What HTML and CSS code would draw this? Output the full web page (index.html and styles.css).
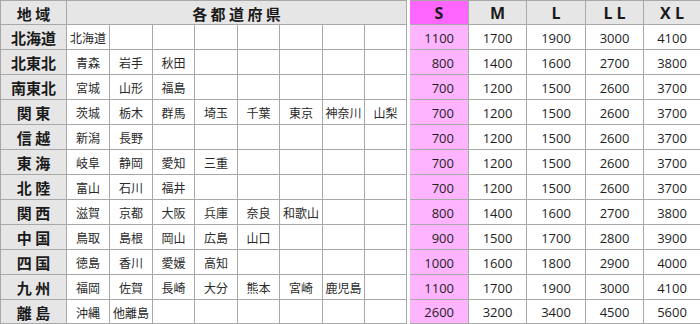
FILE: index.html
```html
<!DOCTYPE html>
<html lang="ja">
<head>
<meta charset="utf-8">
<title>地域別料金表</title>
<link rel="stylesheet" href="styles.css">
</head>
<body>
<div class="page">
  <div class="area-grid">
    <div class="cell head region">地 域</div>
    <div class="cell head pref-head">各 都 道 府 県</div>

    <div class="cell region">北海道</div>
    <div class="cell pref">北海道</div><div class="cell pref"></div><div class="cell pref"></div><div class="cell pref"></div><div class="cell pref"></div><div class="cell pref"></div><div class="cell pref"></div><div class="cell pref"></div>

    <div class="cell region">北東北</div>
    <div class="cell pref">青森</div><div class="cell pref">岩手</div><div class="cell pref">秋田</div><div class="cell pref"></div><div class="cell pref"></div><div class="cell pref"></div><div class="cell pref"></div><div class="cell pref"></div>

    <div class="cell region">南東北</div>
    <div class="cell pref">宮城</div><div class="cell pref">山形</div><div class="cell pref">福島</div><div class="cell pref"></div><div class="cell pref"></div><div class="cell pref"></div><div class="cell pref"></div><div class="cell pref"></div>

    <div class="cell region">関 東</div>
    <div class="cell pref">茨城</div><div class="cell pref">栃木</div><div class="cell pref">群馬</div><div class="cell pref">埼玉</div><div class="cell pref">千葉</div><div class="cell pref">東京</div><div class="cell pref">神奈川</div><div class="cell pref">山梨</div>

    <div class="cell region">信 越</div>
    <div class="cell pref">新潟</div><div class="cell pref">長野</div><div class="cell pref"></div><div class="cell pref"></div><div class="cell pref"></div><div class="cell pref"></div><div class="cell pref"></div><div class="cell pref"></div>

    <div class="cell region">東 海</div>
    <div class="cell pref">岐阜</div><div class="cell pref">静岡</div><div class="cell pref">愛知</div><div class="cell pref">三重</div><div class="cell pref"></div><div class="cell pref"></div><div class="cell pref"></div><div class="cell pref"></div>

    <div class="cell region">北 陸</div>
    <div class="cell pref">富山</div><div class="cell pref">石川</div><div class="cell pref">福井</div><div class="cell pref"></div><div class="cell pref"></div><div class="cell pref"></div><div class="cell pref"></div><div class="cell pref"></div>

    <div class="cell region">関 西</div>
    <div class="cell pref">滋賀</div><div class="cell pref">京都</div><div class="cell pref">大阪</div><div class="cell pref">兵庫</div><div class="cell pref">奈良</div><div class="cell pref">和歌山</div><div class="cell pref"></div><div class="cell pref"></div>

    <div class="cell region">中 国</div>
    <div class="cell pref">鳥取</div><div class="cell pref">島根</div><div class="cell pref">岡山</div><div class="cell pref">広島</div><div class="cell pref">山口</div><div class="cell pref"></div><div class="cell pref"></div><div class="cell pref"></div>

    <div class="cell region">四 国</div>
    <div class="cell pref">徳島</div><div class="cell pref">香川</div><div class="cell pref">愛媛</div><div class="cell pref">高知</div><div class="cell pref"></div><div class="cell pref"></div><div class="cell pref"></div><div class="cell pref"></div>

    <div class="cell region">九 州</div>
    <div class="cell pref">福岡</div><div class="cell pref">佐賀</div><div class="cell pref">長崎</div><div class="cell pref">大分</div><div class="cell pref">熊本</div><div class="cell pref">宮崎</div><div class="cell pref">鹿児島</div><div class="cell pref"></div>

    <div class="cell region">離 島</div>
    <div class="cell pref">沖縄</div><div class="cell pref">他離島</div><div class="cell pref"></div><div class="cell pref"></div><div class="cell pref"></div><div class="cell pref"></div><div class="cell pref"></div><div class="cell pref"></div>
  </div>

  <div class="price-grid">
    <div class="cell head size s-head">S</div>
    <div class="cell head size">M</div>
    <div class="cell head size">L</div>
    <div class="cell head size">L L</div>
    <div class="cell head size">X L</div>

    <div class="cell num s">1100</div><div class="cell num">1700</div><div class="cell num">1900</div><div class="cell num">3000</div><div class="cell num">4100</div>
    <div class="cell num s">800</div><div class="cell num">1400</div><div class="cell num">1600</div><div class="cell num">2700</div><div class="cell num">3800</div>
    <div class="cell num s">700</div><div class="cell num">1200</div><div class="cell num">1500</div><div class="cell num">2600</div><div class="cell num">3700</div>
    <div class="cell num s">700</div><div class="cell num">1200</div><div class="cell num">1500</div><div class="cell num">2600</div><div class="cell num">3700</div>
    <div class="cell num s">700</div><div class="cell num">1200</div><div class="cell num">1500</div><div class="cell num">2600</div><div class="cell num">3700</div>
    <div class="cell num s">700</div><div class="cell num">1200</div><div class="cell num">1500</div><div class="cell num">2600</div><div class="cell num">3700</div>
    <div class="cell num s">700</div><div class="cell num">1200</div><div class="cell num">1500</div><div class="cell num">2600</div><div class="cell num">3700</div>
    <div class="cell num s">800</div><div class="cell num">1400</div><div class="cell num">1600</div><div class="cell num">2700</div><div class="cell num">3800</div>
    <div class="cell num s">900</div><div class="cell num">1500</div><div class="cell num">1700</div><div class="cell num">2800</div><div class="cell num">3900</div>
    <div class="cell num s">1000</div><div class="cell num">1600</div><div class="cell num">1800</div><div class="cell num">2900</div><div class="cell num">4000</div>
    <div class="cell num s">1100</div><div class="cell num">1700</div><div class="cell num">1900</div><div class="cell num">3000</div><div class="cell num">4100</div>
    <div class="cell num s">2600</div><div class="cell num">3200</div><div class="cell num">3400</div><div class="cell num">4500</div><div class="cell num">5600</div>
  </div>
</div>
</body>
</html>
```

FILE: styles.css
```css
html, body {
  margin: 0;
  padding: 0;
  background: #ffffff;
  overflow: hidden;
}

.page {
  display: flex;
  align-items: flex-start;
  gap: 3px;
  width: 700px;
  height: 324px;
  overflow: hidden;
  color: #1e1e1e;
}

.area-grid {
  display: grid;
  grid-template-columns: 65px 42px 42px 41px 42px 41px 42px 41px 41px;
  grid-template-rows: 23px repeat(11, 24px) 23px;
  gap: 1px;
  padding: 1px;
  background: #a8a8a8;
}

.price-grid {
  display: grid;
  grid-template-columns: 58px 57px 58px 57px 56px;
  grid-template-rows: 23px repeat(11, 24px) 23px;
  gap: 1px;
  padding: 1px 0 1px 0;
  background: #a8a8a8;
}

.cell {
  display: flex;
  align-items: center;
  justify-content: center;
  background: #ffffff;
  white-space: nowrap;
  overflow: hidden;
}

.head {
  background: #e6e6e6;
  font-family: "Noto Sans CJK JP", "Noto Sans", sans-serif;
  font-weight: 700;
  font-size: 15px;
  color: #1a1a1a;
}

.pref-head {
  grid-column: span 8;
  font-size: 15px;
  padding-top: 1px;
}

.region {
  background: #e6e6e6;
  font-family: "Noto Sans CJK JP", sans-serif;
  font-weight: 700;
  font-size: 15px;
  color: #1a1a1a;
  padding-top: 1px;
}

.pref {
  font-family: "Noto Sans CJK JP", sans-serif;
  font-size: 12px;
  color: #2a2a2a;
  padding-top: 1px;
}

.size {
  font-family: "Open Sans", "Noto Sans", sans-serif;
  font-weight: 700;
  font-size: 16px;
}

.s-head {
  background: #ff66ff;
}

.num {
  font-family: "Open Sans", "Noto Sans", sans-serif;
  font-size: 13px;
  color: #1e1e1e;
  padding-top: 1px;
}

.num.s {
  background: #ffb4ff;
  justify-content: flex-end;
  padding-right: 14px;
}
```
